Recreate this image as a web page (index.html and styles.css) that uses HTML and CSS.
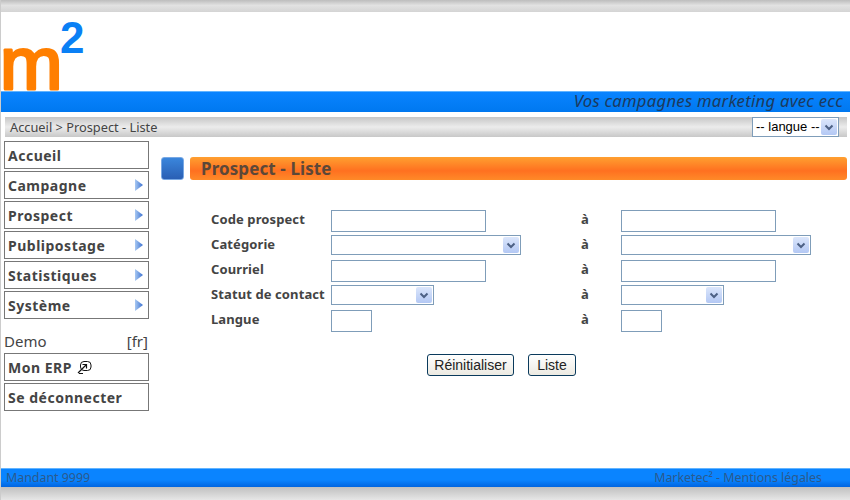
FILE: index.html
```html
<html>

<head>
<meta charset="utf-8">
<link rel="stylesheet" href="styles.css">
</head>

<body>
	<div class="top-band"></div>
	<div class="logo-row">
		<svg width="90" height="79" viewBox="0 0 90 79">
			<text class="logo" transform="translate(-1 76.5)"><tspan class="logo-m">m</tspan><tspan class="logo-2" x="60" y="-35.5">2</tspan></text>
		</svg>
	</div>
	<div class="slogan">Vos campagnes marketing avec ecc</div>
	<div class="crumb">
		<span>Accueil &gt; Prospect - Liste</span>
		<span class="fake-select lang-select"><span class="sel-text">-- langue --</span><span class="sel-btn"><svg width="10" height="7" viewBox="0 0 10 7"><path d="M1.5 1.5L5 5l3.5-3.5" fill="none" stroke="#4d6185" stroke-width="2"/></svg></span></span>
	</div>
	<div class="main">
		<div class="menu">
			<a class="item" href="#">Accueil</a>
			<a class="item" href="#">Campagne<i class="arrow"></i></a>
			<a class="item" href="#">Prospect<i class="arrow"></i></a>
			<a class="item" href="#">Publipostage<i class="arrow"></i></a>
			<a class="item" href="#">Statistiques<i class="arrow"></i></a>
			<a class="item" href="#">Système<i class="arrow"></i></a>
			<div class="user"><span>Demo</span><span>[fr]</span></div>
			<a class="item" href="#">Mon ERP
				<svg class="ext" width="15" height="14" viewBox="0 0 15 14"><rect x="3.5" y="1.5" width="10.5" height="9" rx="3.5" fill="none" stroke="#111"/><path d="M1 13L9.5 4.5M5.5 4.5H9.5V8.5" fill="none" stroke="#111" stroke-width="1.2"/><path d="M2 13.5h4" stroke="#111"/></svg>
			</a>
			<a class="item" href="#">Se déconnecter</a>
		</div>
		<div class="content">
			<div class="title-row">
				<div class="title-box"></div>
				<h1 class="title">Prospect - Liste</h1>
			</div>
			<div class="form">
				<div class="row">
					<label>Code prospect</label>
					<div class="cell"><input class="inp w155" type="text"></div>
					<span class="a">à</span>
					<div class="cell"><input class="inp w155" type="text"></div>
				</div>
				<div class="row">
					<label>Catégorie</label>
					<div class="cell"><span class="fake-select w190"><span class="sel-text"></span><span class="sel-btn"><svg width="10" height="7" viewBox="0 0 10 7"><path d="M1.5 1.5L5 5l3.5-3.5" fill="none" stroke="#4d6185" stroke-width="2"/></svg></span></span></div>
					<span class="a">à</span>
					<div class="cell"><span class="fake-select w190"><span class="sel-text"></span><span class="sel-btn"><svg width="10" height="7" viewBox="0 0 10 7"><path d="M1.5 1.5L5 5l3.5-3.5" fill="none" stroke="#4d6185" stroke-width="2"/></svg></span></span></div>
				</div>
				<div class="row">
					<label>Courriel</label>
					<div class="cell"><input class="inp w155" type="text"></div>
					<span class="a">à</span>
					<div class="cell"><input class="inp w155" type="text"></div>
				</div>
				<div class="row">
					<label>Statut de contact</label>
					<div class="cell"><span class="fake-select w103"><span class="sel-text"></span><span class="sel-btn"><svg width="10" height="7" viewBox="0 0 10 7"><path d="M1.5 1.5L5 5l3.5-3.5" fill="none" stroke="#4d6185" stroke-width="2"/></svg></span></span></div>
					<span class="a">à</span>
					<div class="cell"><span class="fake-select w103"><span class="sel-text"></span><span class="sel-btn"><svg width="10" height="7" viewBox="0 0 10 7"><path d="M1.5 1.5L5 5l3.5-3.5" fill="none" stroke="#4d6185" stroke-width="2"/></svg></span></span></div>
				</div>
				<div class="row">
					<label>Langue</label>
					<div class="cell"><input class="inp w41" type="text"></div>
					<span class="a">à</span>
					<div class="cell"><input class="inp w41" type="text"></div>
				</div>
			</div>
			<div class="buttons">
				<button class="btn btn-reset">Réinitialiser</button>
				<button class="btn btn-list">Liste</button>
			</div>
		</div>
	</div>
	<div class="footer">
		<span>Mandant 9999</span>
		<span class="foot-right">Marketec² - Mentions légales</span>
	</div>
	<div class="bottom-band"></div>
</body>

</html>
```

FILE: styles.css
```css
html, body {
	height: 100%;
}

body {
	margin: 0;
	width: 850px;
	height: 500px;
	overflow: hidden;
	display: flex;
	flex-direction: column;
	background-color: white;
	font-family: "Noto Sans", sans-serif;
	color: #444;
	border-left: 1px solid #ccc;
	box-sizing: border-box;
}

.top-band {
	height: 12px;
	background: linear-gradient(#bdbdbd, #e2e2e2 45%, #d4d4d4);
}

.logo-row {
	height: 79px;
}

.logo-row svg {
	display: block;
	overflow: visible;
}

.logo {
	font-family: "Liberation Sans", sans-serif;
}

.logo-m {
	font-size: 75px;
	fill: #ff7f00;
	stroke: #ff7f00;
	stroke-width: 3px;
	stroke-linejoin: round;
}

.logo-2 {
	font-size: 44px;
	font-weight: bold;
	fill: #0a80f5;
	stroke: none;
}

.slogan {
	box-sizing: border-box;
	height: 21px;
	line-height: 18px;
	background: linear-gradient(#0a84ff, #0078f0);
	border-top: 1px solid #62b4ff;
	text-align: right;
	padding-right: 7px;
	font-size: 16.6px;
	letter-spacing: 0.3px;
	font-style: italic;
	color: #1c3a5e;
}

.crumb {
	margin: 5px 3px 0 4px;
	height: 20px;
	background: linear-gradient(#c6c6c6, #ececec 50%, #c8c8c8);
	display: flex;
	justify-content: space-between;
	align-items: center;
	padding: 0 8px 0 5px;
	font-size: 12.8px;
}

.fake-select {
	display: flex;
	box-sizing: border-box;
	height: 20px;
	background-color: white;
	border: 1px solid #7f9db9;
	padding: 1px;
	font-family: "Liberation Sans", sans-serif;
	font-size: 13px;
	color: black;
}

.lang-select {
	width: 87px;
}

.sel-text {
	flex: 1;
	line-height: 16px;
	padding-left: 2px;
	white-space: nowrap;
}

.sel-btn {
	width: 16px;
	background: linear-gradient(#dbe6fb, #b3c8f4);
	border-radius: 2px;
	display: flex;
	align-items: center;
	justify-content: center;
}

.main {
	flex: 1;
	display: flex;
	padding: 4px 0 0 3px;
	min-height: 0;
}

.menu {
	flex: 0 0 145px;
	display: flex;
	flex-direction: column;
}

.item {
	box-sizing: border-box;
	height: 28px;
	margin-bottom: 2px;
	border: 1px solid #777;
	padding-left: 3px;
	font-size: 14px;
	font-weight: bold;
	letter-spacing: 0.5px;
	color: #444;
	text-decoration: none;
	display: flex;
	align-items: center;
	white-space: nowrap;
}

.arrow {
	margin-left: auto;
	margin-right: 5px;
	width: 8px;
	height: 12px;
	background: linear-gradient(90deg, #a9c9f2, #3a70d0);
	clip-path: polygon(0 0, 100% 50%, 0 100%);
}

.ext {
	margin-left: 5px;
}

.user {
	display: flex;
	justify-content: space-between;
	font-size: 15px;
	height: 20px;
	line-height: 17px;
	margin-top: 12px;
	padding-right: 1px;
}

.content {
	flex: 1;
	min-width: 0;
	padding: 16px 3px 0 12px;
}

.title-row {
	display: flex;
	gap: 6px;
	height: 23px;
}

.title-box {
	width: 23px;
	border-radius: 3px;
	border: 1px solid #78a8e4;
	box-sizing: border-box;
	background: linear-gradient(#3a86dc, #2a5fb4);
}

.title {
	flex: 1;
	margin: 0;
	height: 23px;
	line-height: 24px;
	border-radius: 3px;
	background: linear-gradient(#ffa030, #ff7020 60%, #ff8a28);
	padding-left: 11px;
	font-size: 17px;
	letter-spacing: 0.1px;
	font-weight: bold;
	color: #5c4838;
}

.form {
	margin: 30px 0 0 50px;
}

.row {
	display: flex;
	align-items: flex-start;
	height: 25px;
}

.row label {
	flex: none;
	width: 120px;
	line-height: 18px;
	font-size: 13px;
	letter-spacing: 0.1px;
	font-weight: bold;
	white-space: nowrap;
}

.cell {
	flex: none;
	width: 250px;
	display: flex;
}

.row .a {
	flex: none;
	width: 40px;
	line-height: 18px;
	font-size: 13px;
	font-weight: bold;
}

.inp {
	box-sizing: border-box;
	height: 22px;
	margin: 0;
	padding: 1px;
	border: 1px solid #7f9db9;
	background-color: white;
}

.w155 {
	width: 155px;
}

.w190 {
	width: 190px;
}

.w103 {
	width: 103px;
}

.w41 {
	width: 41px;
}

.buttons {
	margin: 19px 0 0 266px;
	display: flex;
	gap: 14px;
}

.btn {
	height: 22px;
	padding: 0;
	border: 1px solid #0a3a5c;
	border-radius: 3px;
	background: linear-gradient(#fff, #eceae2);
	font-family: "Liberation Sans", sans-serif;
	font-size: 14px;
	color: #222;
}

.btn-reset {
	width: 87px;
}

.btn-list {
	width: 48px;
}

.footer {
	height: 19px;
	line-height: 17px;
	background: linear-gradient(#0a84ff, #0a84ff 60%, #0064e0);
	border-top: 1px solid #62b4ff;
	box-sizing: border-box;
	display: flex;
	justify-content: space-between;
	padding: 0 28px 0 5px;
	font-size: 12.4px;
	color: #2a5a8e;
}

.bottom-band {
	height: 13px;
	background: linear-gradient(#c0c0c0, #e6e6e6);
}
```
